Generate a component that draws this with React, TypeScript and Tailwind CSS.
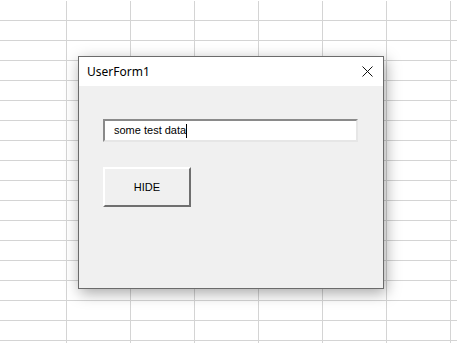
import React from 'react'

const COL_COUNT = 8
const ROWS = 18

function Sheet() {
  return (
    <div className="grid grid-cols-[67px_repeat(7,64px)] auto-rows-[20px] pt-[1px]">
      {Array.from({ length: ROWS * COL_COUNT }).map((_, i) => (
        <div key={i} className="border-b border-r border-[#d4d4d4] bg-white" />
      ))}
    </div>
  )
}

export default function App() {
  return (
    <div className="relative w-[457px] h-[343px] overflow-hidden bg-white">
      <Sheet />

      {/* UserForm window */}
      <div className="absolute left-[78px] top-[56px] w-[306px] h-[233px] flex flex-col border border-[#6b6b6b] bg-[#f0f0f0] shadow-[2px_4px_14px_rgba(0,0,0,0.35)]">
        {/* Title bar */}
        <div className="h-[29px] shrink-0 bg-white flex items-center justify-between pl-[8px] pr-[10px]">
          <span className="text-[12px] text-black font-['Noto_Sans',sans-serif] leading-none">UserForm1</span>
          <svg width="11" height="11" viewBox="0 0 11 11" className="mb-[1px]">
            <path d="M0.5 0.5 L10.5 10.5 M10.5 0.5 L0.5 10.5" stroke="#111" strokeWidth="1" fill="none" />
          </svg>
        </div>

        {/* Body */}
        <div className="flex flex-col items-start pl-[24px] pt-[33px] gap-[25px]">
          <div className="w-[255px] h-[23px] bg-white border-2 border-t-[#8a8a8a] border-l-[#8a8a8a] border-r-[#e6e6e6] border-b-[#e6e6e6] flex items-center pl-[9px]">
            <span className="text-[11px] text-black font-['Liberation_Sans',sans-serif] leading-none">some test data</span>
            <span className="w-[1px] h-[14px] bg-black" />
          </div>

          <button className="w-[88px] h-[40px] bg-[#f0f0f0] border-2 border-t-white border-l-white border-r-[#6f6f6f] border-b-[#6f6f6f] flex items-center justify-center">
            <span className="text-[11px] text-black font-['Liberation_Sans',sans-serif] leading-none">HIDE</span>
          </button>
        </div>
      </div>
    </div>
  )
}
